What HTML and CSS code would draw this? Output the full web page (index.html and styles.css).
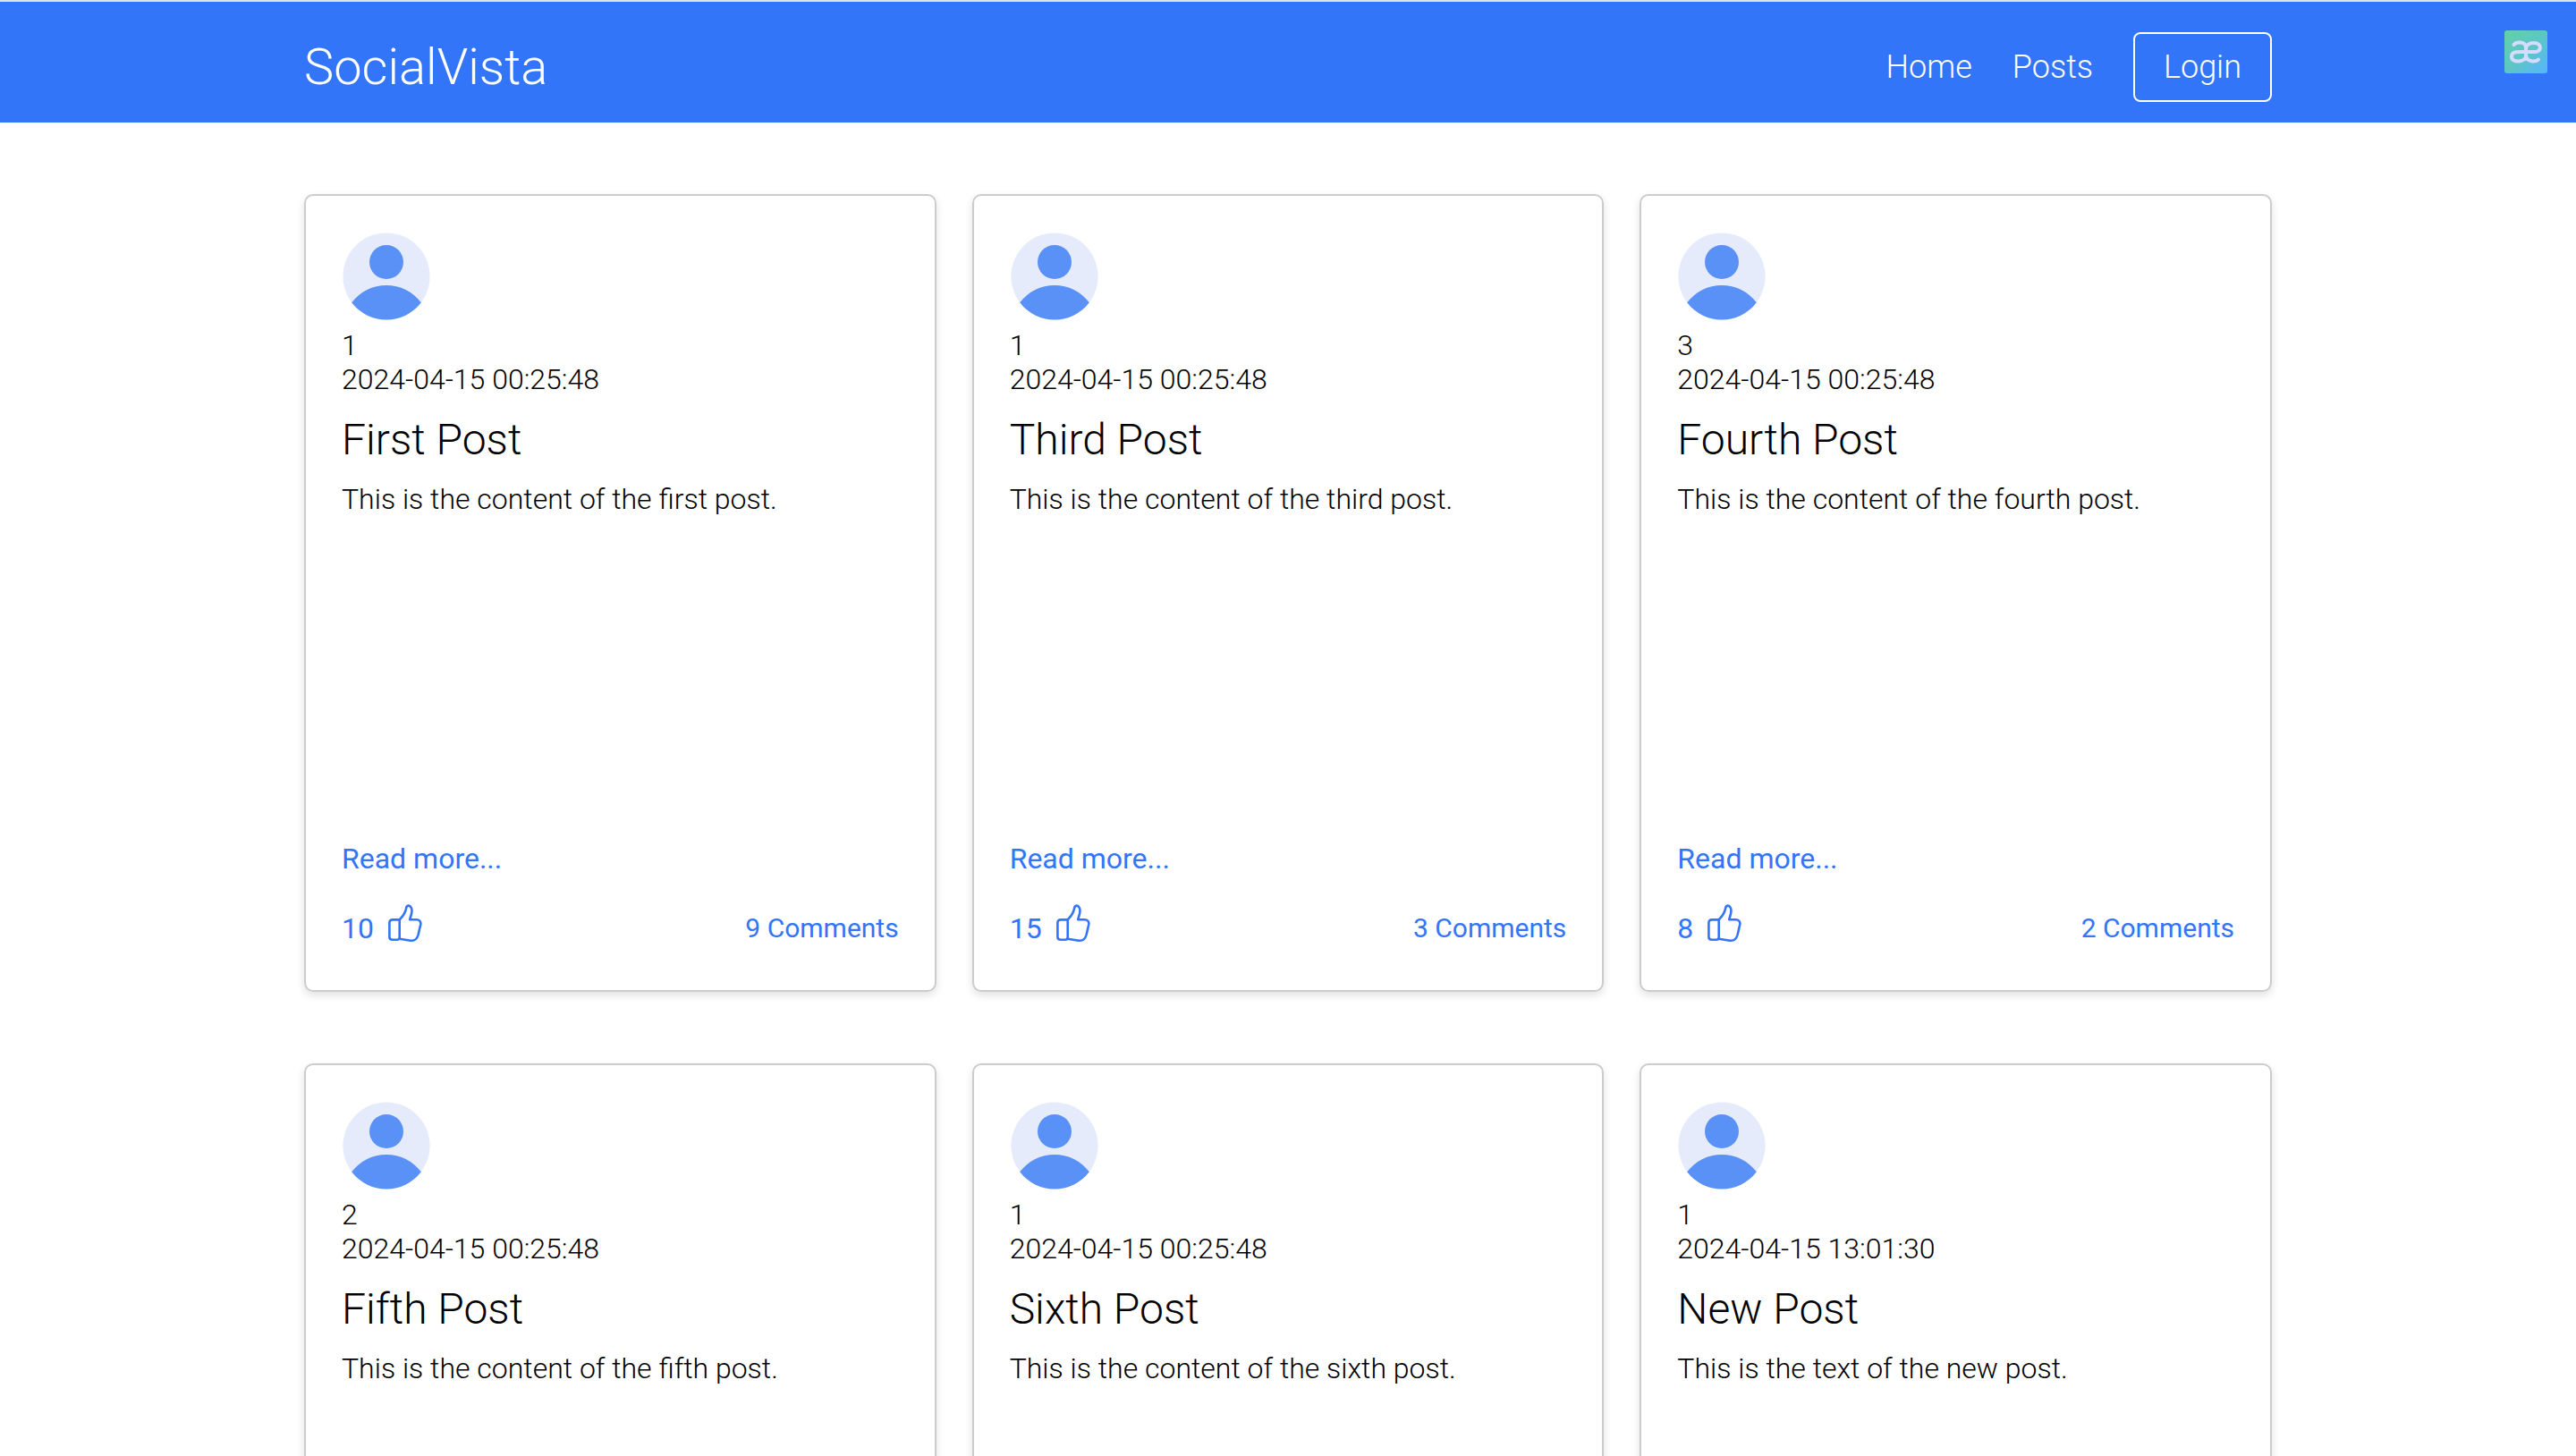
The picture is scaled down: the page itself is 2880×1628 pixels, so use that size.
FILE: index.html
```html
<!DOCTYPE html>
<html lang="en">
<head>
<meta charset="utf-8">
<meta name="viewport" content="width=device-width, initial-scale=1">
<title>SocialVista</title>
<link rel="stylesheet" href="styles.css">
</head>
<body>
<svg class="sprite" aria-hidden="true">
  <symbol id="avatar" viewBox="0 0 100 100">
    <circle cx="50" cy="50" r="48.6" fill="#e6ebfc"/>
    <circle cx="50" cy="34" r="19" fill="#5991f7"/>
    <path d="M11.2 79.200A48.800 48.800 0 0 1 88.800 79.200A48.600 48.600 0 0 1 11.200 79.200Z" fill="#5991f7"/>
  </symbol>
  <symbol id="thumb" viewBox="0 0 40 46">
    <path d="M12.700 17.400H5Q1.400 17.400 1.400 20.500V36.500Q1.400 39.800 5 39.800H9.500Q12.700 39.800 12.700 37ZM12.700 17.400C16 13.500 19 11 20 5C20.700 .7 24 .7 25.800 4C28 8.500 25 13 24.200 17.200H31.500C35 17.200 36.700 19.500 36.300 22.500L33.500 34.500C32 39.500 29 41.200 25 40.700L12.700 38.700Z" fill="none" stroke="currentColor" stroke-width="2.600" stroke-linejoin="round"/>
  </symbol>
</svg>
<header class="header">
  <div class="container header-inner">
    <a class="logo" href="#">SocialVista</a>
    <nav class="nav">
      <a class="nav-link" href="#">Home</a>
      <a class="nav-link" href="#">Posts</a>
      <button class="login" type="button">Login</button>
    </nav>
  </div>
  <svg class="badge" viewBox="0 0 48 48" aria-hidden="true">
    <defs><linearGradient id="bg" x1="0" y1="0" x2="1" y2="1"><stop offset="0" stop-color="#62d1a8"/><stop offset=".55" stop-color="#5cc5c8"/><stop offset="1" stop-color="#56b5ff"/></linearGradient></defs>
    <rect width="48" height="48" rx="3" fill="url(#bg)"/>
    <path d="M10.500 16C13 12.500 23.500 12 24 19V28C24 36 8 37 8 29.500C8 24 13 24 18 24H34C42 24 42 14 33 14C27 14 24 17 24 21V27C24 35 34 36 38 32.500" fill="none" stroke="#d5dcff" stroke-width="4" stroke-linecap="round"/>
  </svg>
</header>
<main class="container posts">
  <article class="card">
    <svg class="avatar" aria-hidden="true"><use href="#avatar"/></svg>
    <p class="meta">1</p>
    <p class="meta-date">2024-04-15 00:25:48</p>
    <h2 class="title">First Post</h2>
    <p class="content">This is the content of the first post.</p>
    <a class="more" href="#">Read more...</a>
    <footer class="actions">
      <button class="like" type="button">10 <svg class="thumb" aria-label="Like"><use href="#thumb"/></svg></button>
      <a class="comments" href="#">9 Comments</a>
    </footer>
  </article>
  <article class="card">
    <svg class="avatar" aria-hidden="true"><use href="#avatar"/></svg>
    <p class="meta">1</p>
    <p class="meta-date">2024-04-15 00:25:48</p>
    <h2 class="title">Third Post</h2>
    <p class="content">This is the content of the third post.</p>
    <a class="more" href="#">Read more...</a>
    <footer class="actions">
      <button class="like" type="button">15 <svg class="thumb" aria-label="Like"><use href="#thumb"/></svg></button>
      <a class="comments" href="#">3 Comments</a>
    </footer>
  </article>
  <article class="card">
    <svg class="avatar" aria-hidden="true"><use href="#avatar"/></svg>
    <p class="meta">3</p>
    <p class="meta-date">2024-04-15 00:25:48</p>
    <h2 class="title">Fourth Post</h2>
    <p class="content">This is the content of the fourth post.</p>
    <a class="more" href="#">Read more...</a>
    <footer class="actions">
      <button class="like" type="button">8 <svg class="thumb" aria-label="Like"><use href="#thumb"/></svg></button>
      <a class="comments" href="#">2 Comments</a>
    </footer>
  </article>
  <article class="card">
    <svg class="avatar" aria-hidden="true"><use href="#avatar"/></svg>
    <p class="meta">2</p>
    <p class="meta-date">2024-04-15 00:25:48</p>
    <h2 class="title">Fifth Post</h2>
    <p class="content">This is the content of the fifth post.</p>
  </article>
  <article class="card">
    <svg class="avatar" aria-hidden="true"><use href="#avatar"/></svg>
    <p class="meta">1</p>
    <p class="meta-date">2024-04-15 00:25:48</p>
    <h2 class="title">Sixth Post</h2>
    <p class="content">This is the content of the sixth post.</p>
  </article>
  <article class="card">
    <svg class="avatar" aria-hidden="true"><use href="#avatar"/></svg>
    <p class="meta">1</p>
    <p class="meta-date">2024-04-15 13:01:30</p>
    <h2 class="title">New Post</h2>
    <p class="content">This is the text of the new post.</p>
  </article>
</main>
</body>
</html>
```
FILE: styles.css
```css
* {
  box-sizing: border-box;
  margin: 0;
  padding: 0;
}

html {
  scrollbar-width: none;
}

body {
  font: 300 32px/38px Roboto, sans-serif;
  color: #000;
  background: #fff;
}

a {
  color: inherit;
  text-decoration: none;
}

button {
  font: inherit;
  color: inherit;
  background: none;
  border: 0;
  cursor: pointer;
}

.sprite {
  display: none;
}

.container {
  width: 100%;
  max-width: 2280px;
  margin: 0 auto;
  padding: 0 40px;
}

.header {
  position: relative;
  border-top: 2px solid #dee1e6;
  background: #3375f8;
  color: #fff;
}

.header-inner {
  display: flex;
  align-items: center;
  justify-content: space-between;
  padding-top: 33px;
  padding-bottom: 22px;
}

.logo {
  font-size: 56px;
  line-height: 80px;
}

.nav {
  display: flex;
  align-items: center;
  gap: 45px;
  font-size: 36px;
}

.login {
  padding: 18px 32px;
  border: 2px solid #fff;
  border-radius: 8px;
}

.badge {
  position: absolute;
  top: 32px;
  right: 32px;
  width: 48px;
  height: 48px;
}

.posts {
  display: grid;
  grid-template-columns: repeat(3, 1fr);
  gap: 80px 40px;
  padding-top: 80px;
  padding-bottom: 80px;
}

.card {
  display: flex;
  flex-direction: column;
  min-height: 892px;
  padding: 40px;
  border: 2px solid #ccc;
  border-radius: 10px;
  box-shadow: 0 4px 10px rgba(0, 0, 0, 0.12);
}

.avatar {
  width: 100px;
  height: 100px;
  margin-bottom: 8px;
}

.title {
  margin: 20px 0 18px;
  font-weight: 300;
  font-size: 48px;
  line-height: 58px;
}

.more {
  margin-top: auto;
  align-self: flex-start;
  font-weight: 400;
  color: #3375f8;
}

.actions {
  display: flex;
  align-items: flex-end;
  justify-content: space-between;
  margin-top: 32px;
  padding-bottom: 10px;
  font-weight: 400;
  color: #3375f8;
}

.like {
  display: flex;
  align-items: flex-end;
  gap: 16px;
}

.thumb {
  width: 40px;
  height: 46px;
}

.comments {
  font-size: 30px;
}
```
